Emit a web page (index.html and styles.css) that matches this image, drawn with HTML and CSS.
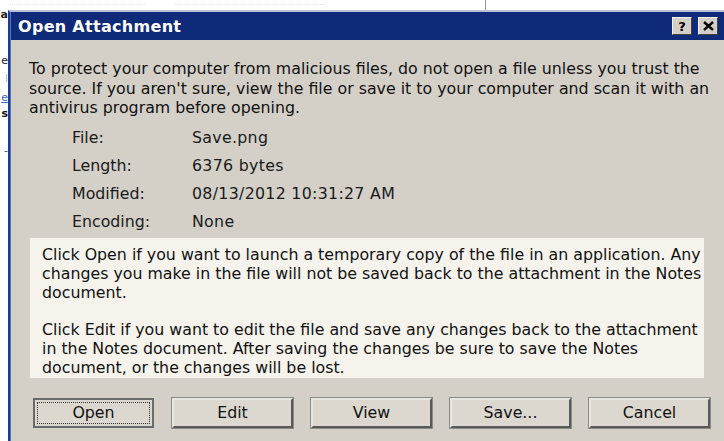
FILE: index.html
```html
<!DOCTYPE html>
<html>
<head>
<meta charset="utf-8">
<title>Open Attachment</title>
<link rel="stylesheet" href="styles.css">
</head>
<body>
<div class="desk">
  <div class="topstrip">
    <div class="faint faint-a"></div>
    <div class="faint faint-b"></div>
    <div class="divider"></div>
  </div>
  <div class="main">
    <div class="behind">
      <div class="frag frag-1"><span>a</span></div>
      <div class="frag frag-2"><span>e</span></div>
      <div class="frag frag-3"><span>l</span></div>
      <div class="frag frag-4"><span class="link">e</span></div>
      <div class="frag frag-5"><span class="bold">s</span></div>
      <div class="frag frag-6"><span>-</span></div>
    </div>

    <div class="dialog">
      <div class="titlebar">
        <span class="title">Open Attachment</span>
        <div class="caption-buttons">
          <span class="cap-btn">?</span>
          <span class="cap-btn cap-close">
            <svg width="11" height="10" viewBox="0 0 11 10"><path d="M1 1 L10 9 M10 1 L1 9" stroke="#000" stroke-width="2.4" fill="none"/></svg>
          </span>
        </div>
      </div>

      <div class="body">
        <p class="intro">To protect your computer from malicious files, do not open a file unless you trust the<br>source. If you aren't sure, view the file or save it to your computer and scan it with an<br>antivirus program before opening.</p>

        <div class="fields">
          <span class="label">File:</span><span class="value">Save.png</span>
          <span class="label">Length:</span><span class="value">6376 bytes</span>
          <span class="label">Modified:</span><span class="value">08/13/2012 10:31:27 AM</span>
          <span class="label">Encoding:</span><span class="value">None</span>
        </div>

        <div class="notes">
          <p>Click Open if you want to launch a temporary copy of the file in an application. Any<br>changes you make in the file will not be saved back to the attachment in the Notes<br>document.</p>
          <p>Click Edit if you want to edit the file and save any changes back to the attachment<br>in the Notes document. After saving the changes be sure to save the Notes<br>document, or the changes will be lost.</p>
        </div>

        <div class="buttons">
          <button class="btn btn-default"><span class="focus">Open</span></button>
          <button class="btn">Edit</button>
          <button class="btn">View</button>
          <button class="btn">Save...</button>
          <button class="btn">Cancel</button>
        </div>
      </div>
    </div>
  </div>
</div>
</body>
</html>
```

FILE: styles.css
```css
html, body {
  margin: 0;
  padding: 0;
  background: #ffffff;
}

.desk {
  width: 724px;
  height: 441px;
  overflow: hidden;
  display: flex;
  flex-direction: column;
  font-family: "DejaVu Sans", sans-serif;
}

/* strip of the page behind, above the dialog */
.topstrip {
  height: 10px;
  flex: 0 0 10px;
  display: flex;
  align-items: center;
  gap: 30px;
  padding-left: 10px;
}
.faint {
  height: 2px;
  border-top: 1px dotted #e4e6ee;
}
.faint-a { width: 135px; }
.faint-b { width: 150px; }
.divider {
  width: 1px;
  height: 10px;
  align-self: flex-start;
  background: #9a9a9a;
  margin-left: 130px;
}

.main {
  display: flex;
  flex: 1;
  min-height: 0;
}

/* sliver of the window behind the dialog */
.behind {
  flex: 0 0 8px;
  display: flex;
  flex-direction: column;
  font-size: 11px;
  color: #222;
}
.frag {
  display: flex;
  justify-content: flex-end;
  height: 13px;
  line-height: 13px;
}
.frag-1 { margin-top: -2px; font-weight: bold; }
.frag-2 { margin-top: 33px; }
.frag-3 { margin-top: 5px; color: #bbb; }
.frag-4 { margin-top: 6px; }
.frag-5 { margin-top: 3px; }
.frag-6 { margin-top: 24px; color: #555; }
.link { color: #3a6bc4; text-decoration: underline; }
.bold { font-weight: bold; color: #111; }

.dialog {
  flex: 0 0 716px;
  box-sizing: border-box;
  background: #d4d0c8;
  border-top: 2px solid #b8c0d8;
  border-left: 2px solid #1e3c8e;
  box-shadow: inset 1px 0 0 #5a74b4;
  display: flex;
  flex-direction: column;
}

.titlebar {
  height: 28px;
  background: #0e2a78;
  display: flex;
  align-items: center;
  justify-content: space-between;
  padding: 0 6px 0 7px;
  margin-left: 1px;
}
.title {
  color: #ffffff;
  font-weight: bold;
  font-size: 16px;
  letter-spacing: 0.3px;
}
.caption-buttons {
  display: flex;
  gap: 6px;
}
.cap-btn {
  width: 20px;
  height: 18px;
  box-sizing: border-box;
  background: #d4d0c8;
  border: 1px solid;
  border-color: #f4f2ee #404040 #404040 #f4f2ee;
  display: flex;
  align-items: center;
  justify-content: center;
  font-weight: bold;
  font-size: 13px;
  color: #000;
}

.body {
  flex: 1;
  padding: 19px 0 0 19px;
  font-size: 15.8px;
  color: #111;
}

.intro {
  margin: 0;
  line-height: 19.5px;
  white-space: nowrap;
}

.fields {
  display: grid;
  grid-template-columns: 120px auto;
  grid-auto-rows: 28px;
  align-items: center;
  padding-left: 43px;
  margin-top: 6px;
  color: #1a1a1a;
}
.value { letter-spacing: 0.3px; }

.notes {
  width: 674px;
  box-sizing: border-box;
  margin-top: 2px;
  margin-left: 1px;
  padding: 7px 12px 0 12px;
  height: 140px;
  background: #f6f3ec;
}
.notes p {
  margin: 0 0 18px;
  line-height: 19px;
  white-space: nowrap;
}
.notes p:last-child { margin-bottom: 0; }

.buttons {
  display: flex;
  gap: 18px;
  margin-top: 20px;
  margin-left: 4px;
}
.btn {
  width: 121px;
  height: 30px;
  box-sizing: border-box;
  background: #dcd8d0;
  border: 2px solid;
  border-color: #e8e6e0 #5a5a5a #5a5a5a #e8e6e0;
  box-shadow: 0 0 0 1px #8a8a8a;
  font-family: "DejaVu Sans", sans-serif;
  font-size: 15.8px;
  color: #111;
  padding: 0;
  display: flex;
  align-items: center;
  justify-content: center;
}
.btn-default {
  border: 2px solid #6a6a6a;
  box-shadow: none;
  padding: 2px;
}
.focus {
  flex: 1;
  align-self: stretch;
  display: flex;
  align-items: center;
  justify-content: center;
  border: 1px dotted #333;
}
```
